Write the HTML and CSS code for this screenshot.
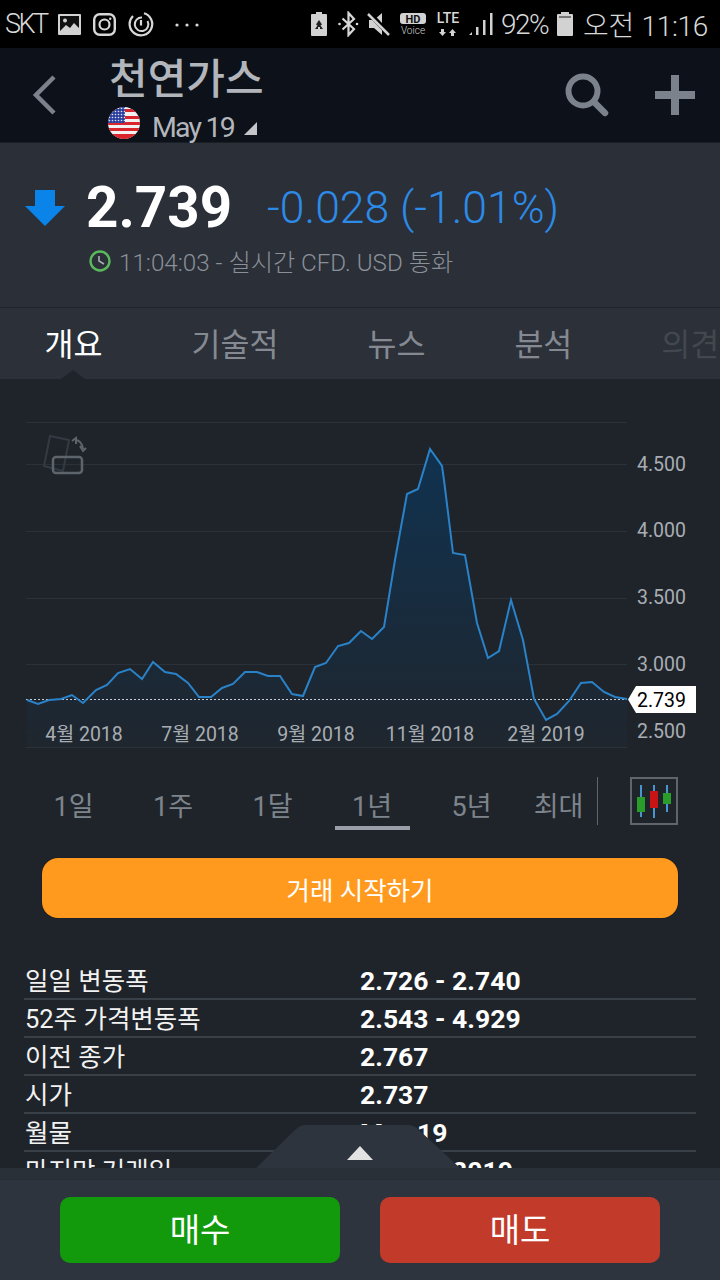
FILE: index.html
```html
<!DOCTYPE html>
<html lang="ko">
  <head>
    <meta charset="utf-8">
    <title>천연가스</title>
    <link rel="stylesheet" href="styles.css">
  </head>

  <body>
    <div class="statusbar">
      <div class="sb-left">
        <span class="sb-carrier">SKT</span>
        <svg width="23" height="21" viewBox="0 0 23 21"><rect width="23" height="21" rx="1" fill="#d2d2d2"/><rect x="2" y="2" width="19" height="15" fill="#111"/><circle cx="7" cy="6.5" r="2" fill="#d2d2d2"/><path d="M2 17 8 11l4 3 4-5 5 5v3z" fill="#d2d2d2"/></svg>
        <svg width="23" height="23" viewBox="0 0 23 23" fill="none" stroke="#d8d8d8"><rect x="1.2" y="1.2" width="20.6" height="20.6" rx="5.5" stroke-width="2.4"/><circle cx="11.5" cy="11.5" r="5" stroke-width="2.2"/><circle cx="17.2" cy="5.8" r="1.2" fill="#d8d8d8" stroke="none"/></svg>
        <svg width="26" height="26" viewBox="0 0 26 26" fill="none" stroke="#d8d8d8"><path d="M16 2.2A11.300 11.300 0 1 1 5 5" stroke-width="2.200"/><path d="M14 6.500A6.800 6.800 0 1 0 19.500 10" stroke-width="2"/><path d="M13 9v5.500" stroke-width="2.200"/></svg>
        <svg class="sb-dots" width="24" height="4" viewBox="0 0 24 4" fill="#d8d8d8"><circle cx="2" cy="2" r="1.6"/><circle cx="12" cy="2" r="1.6"/><circle cx="22" cy="2" r="1.6"/></svg>
      </div>
      <div class="sb-right">
        <svg width="19" height="24" viewBox="0 0 19 24"><path d="M5 0h6v2h4a1 1 0 0 1 1 1v20a1 1 0 0 1-1 1H1a1 1 0 0 1-1-1V3a1 1 0 0 1 1-1h4z" fill="#d2d2d2"/><path d="M8 8l3 4.500-1.500 1L12 17H9v-2H7v2H4l2.500-3.500L5 12.500z" fill="#222"/></svg>
        <svg width="21" height="26" viewBox="0 0 21 26" fill="none" stroke="#d8d8d8" stroke-width="2.2"><path d="M4.500 7.500 16 18l-5.500 6V2L16 8 4.500 18.500"/><circle cx="1.500" cy="13" r="1.300" fill="#d8d8d8" stroke="none"/><circle cx="19" cy="13" r="1.300" fill="#d8d8d8" stroke="none"/></svg>
        <svg width="24" height="24" viewBox="0 0 24 24"><path d="M2 8h5l8-7v22l-8-7H2z" fill="#d2d2d2"/><path d="M2 1 22 22" stroke="#000" stroke-width="5"/><path d="M1 2 22 23" stroke="#d2d2d2" stroke-width="2.500"/></svg>
        <svg width="28" height="24" viewBox="0 0 28 24"><rect x="1" y="1" width="26" height="11" rx="3" fill="#d2d2d2"/><text class="ic-hd" x="14" y="10.500">HD</text><text class="ic-voice" x="14" y="22">Voice</text></svg>
        <svg width="26" height="26" viewBox="0 0 26 26"><text class="ic-lte" x="13" y="12">LTE</text><path d="M6 18h3v3h2l-3.500 4L4 21h2zM16 25v-3h-2l3.500-4 3.500 4h-2v3z" fill="#d2d2d2"/></svg>
        <svg width="24" height="24" viewBox="0 0 24 24" fill="#d2d2d2"><path d="M0 23 3 20v3zM7 15h2.500v8H7zM14 8h2.500v15H14zM21 1h2.500v22H21z"/></svg>
        <span class="sb-pct">92%</span>
        <svg width="19" height="24" viewBox="0 0 19 24"><path d="M5 0h8v2h3a1 1 0 0 1 1 1v20a1 1 0 0 1-1 1H2a1 1 0 0 1-1-1V3a1 1 0 0 1 1-1h3z" fill="#d2d2d2"/><rect x="3" y="4" width="12" height="2" fill="#777"/></svg>
        <span class="sb-clock">오전 11:16</span>
      </div>
    </div>

    <div class="topbar">
      <svg class="back" width="24" height="42" viewBox="0 0 24 42" fill="none" stroke="#7c828b" stroke-width="4.500"><path d="M22 3 4 21l18 18"/></svg>
      <div class="instrument">
        <div class="name">천연가스</div>
        <div class="contract">
          <svg class="flag" width="32" height="32" viewBox="0 0 32 32">
            <defs>
              <clipPath id="flagclip"><circle cx="16" cy="16" r="16"/></clipPath>
              <pattern id="stars" width="3" height="3" patternUnits="userSpaceOnUse"><rect width="3" height="3" fill="#2b3f9e"/><circle cx="1.500" cy="1.500" r="0.800" fill="#dfe4f5"/></pattern>
            </defs>
            <g clip-path="url(#flagclip)">
              <rect width="32" height="32" fill="#f2f0f0"/>
              <path d="M0 2h32v3H0zM0 9h32v3H0zM0 15h32v3H0zM0 21h32v3H0zM0 27h32v5H0z" fill="#d8262c"/>
              <rect width="17" height="16" fill="url(#stars)"/>
            </g>
          </svg>
          <span class="month">May 19</span>
          <svg class="caret" width="13" height="13" viewBox="0 0 13 13"><path d="M13 0v13H0z" fill="#c4c6c9"/></svg>
        </div>
      </div>
      <svg class="search" width="44" height="44" viewBox="0 0 44 44" fill="none" stroke="#7c828b"><circle cx="18" cy="18" r="14.500" stroke-width="6"/><path d="M29 29 40 40" stroke-width="6.500" stroke-linecap="round"/></svg>
      <svg class="plus" width="40" height="40" viewBox="0 0 40 40" fill="#7c828b"><path d="M16 0h8v16h16v8H24v16h-8V24H0v-8h16z"/></svg>
    </div>

    <div class="quote">
      <div class="quote-main">
        <svg class="arrow" width="40" height="36" viewBox="0 0 40 36"><path d="M10 0h20v16h10L20 36 0 16h10z" fill="#0a84e8"/></svg>
        <span class="last">2.739</span>
        <span class="change">-0.028 (-1.01%)</span>
      </div>
      <div class="quote-time">
        <svg width="22" height="22" viewBox="0 0 22 22" fill="none"><circle cx="11" cy="11" r="9.500" stroke="#5cb85c" stroke-width="2.400"/><path d="M10 6v5l5 3" stroke="#a8adb3" stroke-width="1.600"/></svg>
        <span>11:04:03 - 실시간 CFD. USD 통화</span>
      </div>
    </div>

    <div class="tabs">
      <span class="tab active">개요</span>
      <span class="tab">기술적</span>
      <span class="tab">뉴스</span>
      <span class="tab">분석</span>
      <span class="tab faded">의견</span>
    </div>

    <div class="content">
      <svg class="chart" width="720" height="379" viewBox="0 379 720 379">
        <defs>
          <linearGradient id="areafill" x1="0" y1="449" x2="0" y2="747" gradientUnits="userSpaceOnUse">
            <stop offset="0" stop-color="#103250"/>
            <stop offset="1" stop-color="#1f262e"/>
          </linearGradient>
        </defs>
        <g class="grid">
          <path d="M26 422.500H627M26 464.500H627M26 531.500H627M26 598.500H627M26 664.500H627M26 731.500H627M26 747.500H627"/>
        </g>
        <path class="area" d="M27 700 38 704 49 700 61 699 72 695 83 703 96 690 107 685 118 673 130 669 142 679 153 662 165 672 176 674 188 683 199 697 211 697 222 688 233 684 245 672 257 672 268 676 280 676 292 694 303 696 315 667 326 663 338 646 349 643 361 631 372 639 384 627 395 560 407 494 418 489 430 449 442 466 444 480 453 553 465 555 477 623 488 658 499 651 511 600 523 640 534 699 546 720 557 714 569 701 581 683 592 682 604 692 615 697 627 699V747H27z"/>
        <path class="dotted" d="M26 699.500H627"/>
        <polyline class="line" points="27,700 38,704 49,700 61,699 72,695 83,703 96,690 107,685 118,673 130,669 142,679 153,662 165,672 176,674 188,683 199,697 211,697 222,688 233,684 245,672 257,672 268,676 280,676 292,694 303,696 315,667 326,663 338,646 349,643 361,631 372,639 384,627 395,560 407,494 418,489 430,449 442,466 444,480 453,553 465,555 477,623 488,658 499,651 511,600 523,640 534,699 546,720 557,714 569,701 581,683 592,682 604,692 615,697 627,699"/>
        <g class="rotate">
          <path class="ghost" d="M50 436 69 440 63 471 44 466z"/>
          <rect class="phone" x="53" y="457" width="29" height="16" rx="3"/>
          <path class="turn" d="M75 440c4 0 7 3 8 9M72 441l4-3v6M80 446l3 5 3-3"/>
        </g>
        <g class="price-axis">
          <text x="637" y="471">4.500</text>
          <text x="637" y="537">4.000</text>
          <text x="637" y="604">3.500</text>
          <text x="637" y="671">3.000</text>
          <text x="637" y="738">2.500</text>
        </g>
        <g class="time-axis">
          <text x="84" y="741">4월 2018</text>
          <text x="200" y="741">7월 2018</text>
          <text x="316" y="741">9월 2018</text>
          <text x="430" y="741">11월 2018</text>
          <text x="546" y="741">2월 2019</text>
        </g>
        <path class="tag" d="M636 686H696V713H636L628 699.500z"/>
        <text class="tag-text" x="637" y="707">2.739</text>
      </svg>

      <div class="ranges">
        <span class="range">1일</span>
        <span class="range">1주</span>
        <span class="range">1달</span>
        <span class="range active">1년</span>
        <span class="range">5년</span>
        <span class="range max">최대</span>
        <span class="range-sep"></span>
        <svg class="candles" width="48" height="48" viewBox="0 0 48 48">
          <rect x="1" y="1" width="46" height="46" fill="none" stroke="#5f656d" stroke-width="2"/>
          <path d="M11 8V40M24 8V41M37 8V35" stroke="#4a94cf" stroke-width="2"/>
          <rect x="7" y="20" width="8" height="15" fill="#2a9c2a"/>
          <rect x="20" y="14" width="8" height="17" fill="#c81414"/>
          <rect x="33" y="16" width="8" height="11" fill="#2a9c2a"/>
        </svg>
      </div>

      <div class="start-btn">거래 시작하기</div>

      <table class="stats">
        <tr><td class="label">일일 변동폭</td><td class="value">2.726 - 2.740</td></tr>
        <tr><td class="label">52주 가격변동폭</td><td class="value">2.543 - 4.929</td></tr>
        <tr><td class="label">이전 종가</td><td class="value">2.767</td></tr>
        <tr><td class="label">시가</td><td class="value">2.737</td></tr>
        <tr><td class="label">월물</td><td class="value">May 19</td></tr>
        <tr><td class="label">마지막 거래일</td><td class="value">Apr 26, 2019</td></tr>
      </table>
    </div>

    <div class="footer">
      <svg class="handle" width="204" height="43" viewBox="0 0 204 43"><path d="M0 43 39 5Q44 0 50 0H152Q158 0 163 5L204 43z" fill="#2e343d"/><path d="M91 35 104 21 117 35z" fill="#e2e2e2"/></svg>
      <div class="trade buy">매수</div>
      <div class="trade sell">매도</div>
    </div>
  </body>
</html>
```

FILE: styles.css
```css
html,body {margin:0; padding:0;}
body {width:720px; height:1280px; overflow:hidden; display:flex; flex-direction:column; background:#1f242b; font-family:Roboto, "Noto Sans CJK KR", sans-serif;}
svg {display:block; flex:none;}

.statusbar {height:48px; flex:none; background:#000; display:flex; justify-content:space-between; align-items:center; padding:0 12px 0 5px; color:#d8d8d8; font-size:28px; font-weight:300;}
.sb-left {display:flex; align-items:center; gap:12px;}
.sb-right {display:flex; align-items:center; gap:8px;}
.sb-carrier {letter-spacing:-2.5px; font-size:27px; margin-right:-1px;}
.sb-dots {margin-left:9px; margin-top:2px;}
.sb-pct {letter-spacing:-1.5px; width:47px;}
.sb-clock {word-spacing:1px; letter-spacing:-0.3px;}
.ic-hd {font-size:11px; font-weight:700; fill:#111; text-anchor:middle;}
.ic-voice {font-size:10px; fill:#d2d2d2; text-anchor:middle;}
.ic-lte {font-size:14px; font-weight:500; fill:#d8d8d8; text-anchor:middle;}

.topbar {height:95px; flex:none; background:#0d1119; display:flex; align-items:center; box-sizing:border-box; padding-left:32px; border-bottom:1px solid #1a1e25;}
.back {margin-right:53px;}
.instrument {flex:1; align-self:flex-start; padding-top:7px;}
.name {font-size:42px; line-height:50px; font-weight:500; color:#b2b6bc;}
.contract {display:flex; align-items:center; height:36px; margin-top:2px; margin-left:-1px;}
.flag {margin-top:-4px;}
.month {font-size:28.5px; color:#b2b6bc; margin-left:12px; margin-top:4px; letter-spacing:-1.8px;}
.caret {margin-left:10px; margin-top:7px;}
.search {margin-right:46px;}
.plus {margin-right:25px;}

.quote {height:165px; flex:none; background:#2a2f38; box-sizing:border-box; padding:32px 0 0 25px; border-bottom:1px solid #20242b;}
.quote-main {display:flex; align-items:center; height:66px;}
.last {font-size:56.5px; font-weight:700; color:#fff; margin-left:21px;}
.change {font-size:44.5px; font-weight:300; color:#2d8ae6; margin-left:35px;}
.quote-time {display:flex; align-items:center; gap:8px; margin:2px 0 0 64px; font-size:24.2px; font-weight:300; color:#8a9097;}

.tabs {height:71px; flex:none; background:#2b3039; display:flex; align-items:center; gap:89px; box-sizing:border-box; padding:0 0 3px 44.500px; position:relative; overflow:hidden; white-space:nowrap;}
.tab {font-size:31.5px; color:#858a92;}
.tab.active {color:#fff;}
.tab.active::after {content:""; position:absolute; left:61px; bottom:0; border:12px solid transparent; border-top:0; border-bottom:9px solid #1f242b;}
.tab.faded {color:#43484f;}

.content {flex:1; min-height:0; overflow:hidden;}
.grid path {stroke:#2b3138; stroke-width:1; fill:none;}
.area {fill:url(#areafill);}
.dotted {stroke:#c8ccd0; stroke-width:1; stroke-dasharray:2 2; fill:none;}
.line {fill:none; stroke:#2a82c8; stroke-width:2;}
.ghost {fill:none; stroke:#343a42; stroke-width:2;}
.phone {fill:none; stroke:#5e646c; stroke-width:2.5;}
.turn {fill:none; stroke:#5e646c; stroke-width:2;}
.price-axis text {font-size:19.5px; fill:#a8adb3;}
.time-axis text {font-size:19.5px; fill:#a8adb3; text-anchor:middle;}
.tag {fill:#fff;}
.tag-text {font-size:19.5px; fill:#000;}

.ranges {display:flex; align-items:flex-start; padding:19px 0 0 36px; gap:24.5px;}
.range {width:75px; height:53px; box-sizing:border-box; padding-top:5px; border-bottom:4px solid transparent; display:flex; align-items:center; justify-content:center; font-size:27px; color:#7e848c;}
.range.active {border-bottom-color:#9a9ea8;}
.range.max {width:50px;}
.range-sep {width:1px; height:48px; background:#5f656d; margin-left:-11px;}
.candles {margin-left:7px;}

.start-btn {height:60px; margin:28px 42px 0; background:#ff9a1e; border-radius:16px; box-shadow:0 0 1px #000; display:flex; align-items:center; justify-content:center; font-size:25.5px; color:#fff;}

.stats {border-collapse:collapse; margin:43px 0 0 24px; width:672px;}
.stats td {height:38px; padding:3px 0 0; box-sizing:border-box; border-bottom:2px solid #3a4048; white-space:nowrap; line-height:33px; overflow:hidden;}
.stats .label {width:336px; padding-left:1px; font-size:25.5px; color:#f2f2f2;}
.stats .value {padding-top:1px; font-size:26.5px; font-weight:700; color:#fff;}

.footer {height:112px; flex:none; background:#2e343d; box-sizing:border-box; padding:29px 60px 0; display:flex; gap:40px; position:relative; box-shadow:inset 0 11px 0 #2a3038, inset 0 12px 0 #272c34;}
.handle {position:absolute; left:256px; bottom:100%;}
.trade {flex:1; height:66px; box-sizing:border-box; padding-bottom:5px; border-radius:10px; display:flex; align-items:center; justify-content:center; font-size:33px; color:#fff;}
.buy {background:#129a0c;}
.sell {background:#c23a2a;}
```
